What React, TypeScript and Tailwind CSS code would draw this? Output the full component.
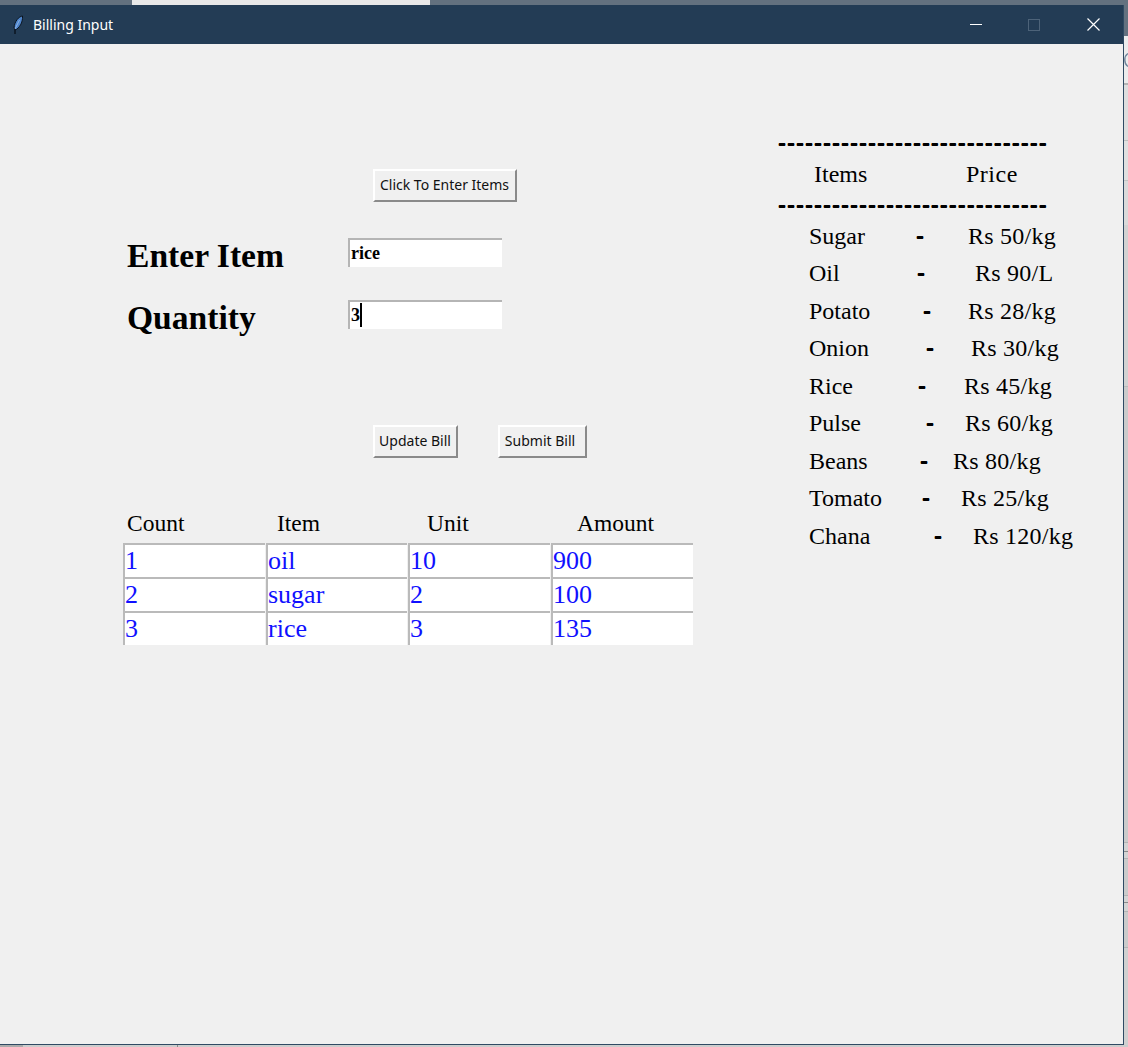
const rows: { name: string; dash: string; price: string; value: string }[] = [
  { name: "Sugar", dash: "w-[107px]", price: "w-[52px]", value: "Rs 50/kg" },
  { name: "Oil", dash: "w-[108px]", price: "w-[58px]", value: "Rs 90/L" },
  { name: "Potato", dash: "w-[114px]", price: "w-[45px]", value: "Rs 28/kg" },
  { name: "Onion", dash: "w-[117px]", price: "w-[45px]", value: "Rs 30/kg" },
  { name: "Rice", dash: "w-[109px]", price: "w-[46px]", value: "Rs 45/kg" },
  { name: "Pulse", dash: "w-[117px]", price: "w-[39px]", value: "Rs 60/kg" },
  { name: "Beans", dash: "w-[111px]", price: "w-[33px]", value: "Rs 80/kg" },
  { name: "Tomato", dash: "w-[113px]", price: "w-[39px]", value: "Rs 25/kg" },
  { name: "Chana", dash: "w-[125px]", price: "w-[39px]", value: "Rs 120/kg" },
];

const table = [
  ["1", "oil", "10", "900"],
  ["2", "sugar", "2", "100"],
  ["3", "rice", "3", "135"],
];

const stripBands = [
  "h-[31px] bg-[#63717f]",
  "h-[47px] bg-[#ececec]",
  "h-[2px] bg-[#b4b4b4]",
  "h-[55px] bg-[#dedede]",
  "h-[1px] bg-[#c0c0c0]",
  "h-[39px] bg-[#e0e0e0]",
  "h-[1px] bg-[#c4c4c4]",
  "h-[44px] bg-[#dadada]",
  "h-[161px] bg-[#d2d2d2]",
  "h-[1px] bg-[#bbbbbb]",
  "h-[455px] bg-[#cbcbcb]",
  "h-[1px] bg-[#b4b4b4]",
  "h-[8px] bg-[#d4d4d4]",
  "h-[1px] bg-[#8a8a8a]",
  "h-[6px] bg-[#d4d4d4]",
  "h-[1px] bg-[#b4b4b4]",
  "h-[36px] bg-[#cbcbcb]",
  "h-[1px] bg-[#b4b4b4]",
  "h-[6px] bg-[#d4d4d4]",
  "h-[1px] bg-[#8a8a8a]",
  "h-[8px] bg-[#d4d4d4]",
  "h-[1px] bg-[#b4b4b4]",
  "h-[35px] bg-[#cbcbcb]",
  "h-[1px] bg-[#b4b4b4]",
  "h-[92px] bg-[#d0d0d0]",
];

function TkButton({ label, className }: { label: string; className: string }) {
  return (
    <button
      className={`h-[33px] border-t-2 border-l-2 border-t-white border-l-white border-r-2 border-b-2 border-r-[#8a8a8a] border-b-[#8a8a8a] bg-[#f0f0f0] pb-[2px] text-center text-[14px] text-[#111111] font-['Noto_Sans','Open_Sans',sans-serif] ${className}`}
    >
      {label}
    </button>
  );
}

function Field({ value, caret }: { value: string; caret?: boolean }) {
  return (
    <div className="flex h-[29px] w-[154px] items-center border-t-2 border-l-2 border-t-[#b5b5b5] border-l-[#b5b5b5] bg-white pb-[2px] pl-[1px] text-[18px] leading-none font-bold text-black">
      <span>{value}</span>
      {caret && <span className="h-[24px] w-[2px] bg-black" />}
    </div>
  );
}

export default function App() {
  return (
    <div className="flex h-[1047px] w-[1128px] flex-col overflow-hidden bg-[#d0d0d0] font-['Liberation_Serif',serif]">
      <div className="flex h-[5px] shrink-0 bg-[#63717f]">
        <div className="ml-[132px] h-full w-[298px] bg-[#e8e8e8]" />
      </div>
      <div className="flex h-[1040px] shrink-0">
        <div className="flex h-full w-[1124px] shrink-0 flex-col border-r border-b border-[#2f4a63] bg-[#f0f0f0]">
          <header className="flex h-[39px] shrink-0 items-center bg-[#233c55] text-white">
            <svg className="ml-[12px] h-[20px] w-[12px]" viewBox="0 0 12 20">
              <path d="M10.5 1C7 1.5 2.5 6 2 13L3.5 15C7 13 11 8 10.5 1Z" fill="#4f86cc" stroke="#0b1420" strokeWidth="1" />
              <path d="M7.5 5 3 14" stroke="#a9c8ee" strokeWidth="0.7" />
              <path d="M3 14 3 19" stroke="#0b1420" strokeWidth="1.5" />
            </svg>
            <span className="ml-[9px] font-['Noto_Sans',sans-serif] text-[14px]">Billing Input</span>
            <div className="ml-auto flex items-center">
              <span className="h-[1px] w-[12px] bg-white" />
              <span className="ml-[46px] h-[12px] w-[12px] border border-[#4d6379]" />
              <svg className="mr-[23px] ml-[47px] h-[13px] w-[13px]" viewBox="0 0 13 13" stroke="white" strokeWidth="1.2">
                <path d="M0.5 0.5 12.5 12.5M12.5 0.5 0.5 12.5" />
              </svg>
            </div>
          </header>
          <main className="flex min-h-0 flex-1">
            <section className="w-[778px] shrink-0 pt-[125px] pl-[123px]">
              <TkButton label="Click To Enter Items" className="ml-[250px] w-[144px] pr-[1px]" />
              <div className="mt-[36px] flex h-[29px] items-start">
                <div className="mt-[3px] ml-[4px] w-[221px] text-[33.6px] leading-[29px] font-bold text-black">Enter Item</div>
                <Field value="rice" />
              </div>
              <div className="mt-[33px] flex h-[29px] items-start">
                <div className="mt-[3px] ml-[4px] w-[221px] text-[33.6px] leading-[29px] font-bold text-black">Quantity</div>
                <Field value="3" caret />
              </div>
              <div className="mt-[96px] ml-[250px] flex gap-[40px]">
                <TkButton label="Update Bill" className="w-[85px] pr-[1px]" />
                <TkButton label="Submit Bill" className="w-[89px] pr-[5px]" />
              </div>
              <div className="mt-[49px] ml-[4px] grid grid-cols-[150px_150px_150px_150px] text-[23.5px] leading-[32px] text-black">
                <div>Count</div>
                <div>Item</div>
                <div>Unit</div>
                <div>Amount</div>
              </div>
              <div className="mt-[4px] grid w-[570px] grid-cols-[142px_141px_142px_142px] gap-x-[1px]">
                {table.flat().map((cell, i) => (
                  <div
                    key={i}
                    className="flex h-[34px] items-center border-t-2 border-l-2 border-t-[#bababa] border-l-[#bababa] bg-white text-[26px] leading-none text-[#1010ff]"
                  >
                    {cell}
                  </div>
                ))}
              </div>
            </section>
            <section className="flex-1 pt-[82px] text-black">
              <div className="h-[34px] text-[24px] leading-[34px] font-bold tracking-[1px] [text-shadow:0_-1px_0_#000]">------------------------------</div>
              <div className="flex h-[28px] items-center pl-[36px] text-[24px] leading-none">
                <span className="w-[152px]">Items</span>
                <span className="tracking-[0.5px]">Price</span>
              </div>
              <div className="h-[34px] text-[24px] leading-[34px] font-bold tracking-[1px] [text-shadow:0_-1px_0_#000]">------------------------------</div>
              {rows.map((r, i) => (
                <div key={r.name} className={`flex h-[37.5px] items-center pl-[31px] text-[24px] leading-none ${i === 0 ? "-mt-[5px]" : ""}`}>
                  <span className={r.dash}>{r.name}</span>
                  <span className={`${r.price} font-bold [text-shadow:0_-1px_0_#000]`}>-</span>
                  <span className="tracking-[0.25px]">{r.value}</span>
                </div>
              ))}
            </section>
          </main>
        </div>
        <aside className="flex h-full w-[4px] shrink-0 flex-col overflow-hidden">
          {stripBands.map((band, i) => (
            <div key={i} className={`shrink-0 ${band}`}>
              {i === 1 && (
                <svg className="mt-[16px] block h-[16px] w-[4px]" viewBox="0 0 4 16" fill="none" stroke="#6f849b" strokeWidth="1.4">
                  <path d="M4 1.5C1.5 3 0.8 5.5 0.8 8S1.5 13 4 14.5" />
                </svg>
              )}
            </div>
          ))}
        </aside>
      </div>
      <div className="flex h-[2px] shrink-0">
        <div className="w-[23px] bg-[#ababab]" />
        <div className="w-[154px] bg-[#cdcdcd]" />
        <div className="w-[1px] bg-[#8a8a8a]" />
        <div className="flex-1 bg-[#cdcdcd]" />
      </div>
    </div>
  );
}
